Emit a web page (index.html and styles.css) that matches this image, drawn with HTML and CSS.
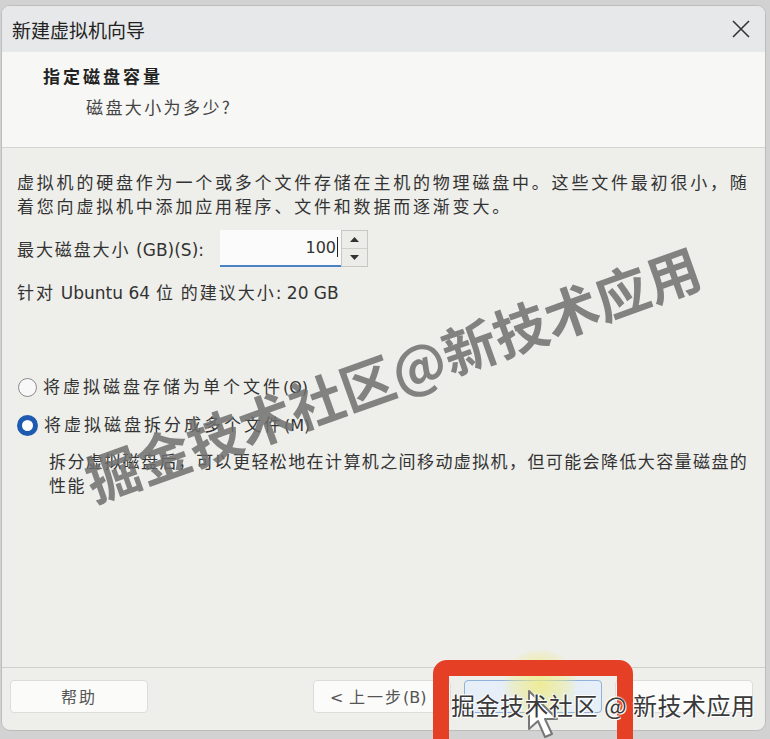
FILE: index.html
```html
<!DOCTYPE html>
<html lang="zh-CN">
<head>
<meta charset="utf-8">
<title>新建虚拟机向导</title>
<link rel="stylesheet" href="styles.css">
</head>
<body>
<div class="dialog">
  <div class="titlebar">
    <span class="title">新建虚拟机向导</span>
    <svg class="close" width="18" height="18" viewBox="0 0 18 18"><path d="M1 1L17 17M17 1L1 17" stroke="#333" stroke-width="1.6" fill="none"/></svg>
  </div>
  <div class="header">
    <div class="h-title">指定磁盘容量</div>
    <div class="h-sub">磁盘大小为多少?</div>
  </div>
  <div class="body">
    <p class="para">虚拟机的硬盘作为一个或多个文件存储在主机的物理磁盘中。这些文件最初很小，随<br>着您向虚拟机中添加应用程序、文件和数据而逐渐变大。</p>
    <div class="size-row">
      <span class="label">最大磁盘大小 <span class="lat">(GB)(S):</span></span>
      <div class="spin">
        <div class="spin-input"><span class="lat">100</span><span class="caret"></span></div>
        <div class="spin-btns">
          <div class="sb"><svg width="9" height="5" viewBox="0 0 9 5"><path d="M0 5L4.5 0L9 5Z" fill="#333"/></svg></div>
          <div class="sb"><svg width="9" height="5" viewBox="0 0 9 5"><path d="M0 0L4.5 5L9 0Z" fill="#333"/></svg></div>
        </div>
      </div>
    </div>
    <div class="rec">针对 <span class="lat">Ubuntu 64</span> 位 的建议大小<span class="lat">: 20 GB</span></div>
    <div class="radio r1"><span class="dot"></span><span>将虚拟磁盘存储为单个文件<span class="lat">(O)</span></span></div>
    <div class="radio r2"><span class="dot on"></span><span>将虚拟磁盘拆分成多个文件<span class="lat">(M)</span></span></div>
    <p class="desc">拆分虚拟磁盘后，可以更轻松地在计算机之间移动虚拟机，但可能会降低大容量磁盘的<br>性能</p>
  </div>
  <div class="footer">
    <button class="btn">帮助</button>
    <div class="right-btns">
      <button class="btn prev"><span class="lat">&lt;</span> 上一步<span class="lat">(B)</span></button>
      <button class="btn next" aria-label="下一步(N) &gt;"></button>
      <button class="btn" aria-label="取消"></button>
    </div>
  </div>
</div>

<div class="glow"></div>
<svg class="cursor" width="34" height="50" viewBox="0 0 34 50"><path d="M2 2L2 40L11 32L18 48L25 45L18 30L30 30Z" fill="#fff" stroke="#777" stroke-width="2" stroke-linejoin="round"/></svg>
<div class="redbox"></div>
<div class="wm-small">掘金技术社区 @ 新技术应用</div>
<div class="wm-big">掘金技术社区@新技术应用</div>
</body>
</html>
```
FILE: styles.css
```css
* { box-sizing: border-box; }
html, body { margin: 0; padding: 0; }
body {
  width: 770px;
  height: 739px;
  background: #d2d2d2;
  overflow: hidden;
  position: relative;
  font-family: "Noto Sans CJK SC", "DejaVu Sans", sans-serif;
  color: #333;
}
.lat { font-family: "DejaVu Sans", "Noto Sans CJK SC", sans-serif; letter-spacing: 0; }

.dialog {
  margin: 5px 0 0 1px;
  width: 765px;
  height: 726px;
  border-radius: 9px;
  background: #eeeeea;
  border: 1px solid #bdbdbd;
  display: flex;
  flex-direction: column;
  overflow: hidden;
}
.titlebar {
  height: 46px;
  flex: none;
  background: #e7e8ea;
  display: flex;
  align-items: center;
  justify-content: space-between;
  padding: 0 13px 0 10px;
}
.title { font-size: 19px; color: #222; letter-spacing: 0; }
.close { margin-right: 2px; }

.header {
  height: 96px;
  flex: none;
  background: #f7f7f5;
  border-bottom: 1px solid #d4d4d0;
  padding: 11px 0 0 41px;
}
.h-title { font-size: 17px; font-weight: 700; letter-spacing: 3px; line-height: 26px; color: #222; }
.h-sub { font-size: 17px; letter-spacing: 2.4px; line-height: 26px; margin: 5px 0 0 43px; color: #444; }

.body {
  flex: 1;
  padding: 22px 0 0 15px;
  font-size: 17px;
  letter-spacing: 2.8px;
}
.para { margin: 0; line-height: 24px; }
.size-row { display: flex; align-items: center; margin-top: 12px; height: 36px; }
.label { letter-spacing: 1.9px; width: 203px; }
.label .lat { font-size: 17px; }
.spin { display: flex; height: 37px; }
.spin-input {
  width: 121px;
  background: #fbfbfb;
  border-bottom: 2px solid #4a82c4;
  display: flex;
  align-items: center;
  justify-content: flex-end;
  padding-right: 3px;
  font-size: 16px;
}
.caret { width: 1px; height: 20px; background: #222; margin-left: 1px; }
.spin-btns {
  width: 27px;
  border: 1px solid #c7c7c4;
  background: #ecece9;
  display: flex;
  flex-direction: column;
}
.sb { flex: 1; display: flex; align-items: center; justify-content: center; }
.sb + .sb { border-top: 1px solid #d0d0cc; }

.rec { margin-top: 14px; line-height: 24px; letter-spacing: 2px; }
.rec .lat { font-size: 17px; }

.radio { display: flex; align-items: center; line-height: 24px; letter-spacing: 3px; }
.radio .lat { font-size: 16px; }
.r1 { margin-top: 69px; }
.r2 { margin-top: 12px; }
.dot {
  width: 19px; height: 19px;
  border-radius: 50%;
  border: 1.5px solid #8a8a8a;
  background: #f8f8f8;
  margin: 0 6px 0 1px;
  flex: none;
}
.dot.on { border: 5px solid #1e5bb0; background: #fff; width: 21px; height: 21px; margin-left: 0; }

.desc { margin: 11px 0 0 32px; line-height: 24px; letter-spacing: 1.4px; white-space: nowrap; }

.footer {
  height: 63px;
  flex: none;
  border-top: 1px solid #cfcfcb;
  display: flex;
  align-items: center;
  justify-content: space-between;
  padding: 0 12px 6px 8px;
}
.right-btns { display: flex; gap: 13px; }
.btn {
  width: 138px;
  height: 33px;
  background: #fbfbfa;
  border: 1px solid #dcdcd8;
  border-radius: 4px;
  font-family: "Noto Sans CJK SC", "DejaVu Sans", sans-serif;
  font-size: 16px;
  color: #555;
  letter-spacing: 2px;
  padding: 0;
}
.prev { text-align: left; padding-left: 16px; }
.next { background: #e6eef8; border-color: #8fb2dc; }

.glow {
  position: absolute;
  left: 500px; top: 650px;
  width: 80px; height: 70px;
  border-radius: 50%;
  background: radial-gradient(circle, rgba(240,235,120,0.75) 0%, rgba(240,235,120,0.35) 50%, rgba(240,235,120,0) 72%);
}
.cursor { position: absolute; left: 527px; top: 689px; }
.redbox {
  position: absolute;
  left: 433px; top: 660px;
  width: 200px; height: 95px;
  border: 16px solid #e53f26;
  border-radius: 14px;
}
.wm-small {
  position: absolute;
  left: 451px; top: 688px;
  font-size: 24px;
  line-height: 34px;
  color: #3a3a3a;
  letter-spacing: 0.5px;
  text-shadow: 0 0 2px #fff, 0 0 2px #fff, 1px 1px 0 #fff, -1px -1px 0 #fff;
}
.wm-big {
  position: absolute;
  left: 392px; top: 372px;
  transform: translate(-50%, -50%) rotate(-19.6deg);
  white-space: nowrap;
  font-size: 54px;
  font-weight: 700;
  color: rgba(110,110,110,0.85);
  letter-spacing: 0;
}
```
